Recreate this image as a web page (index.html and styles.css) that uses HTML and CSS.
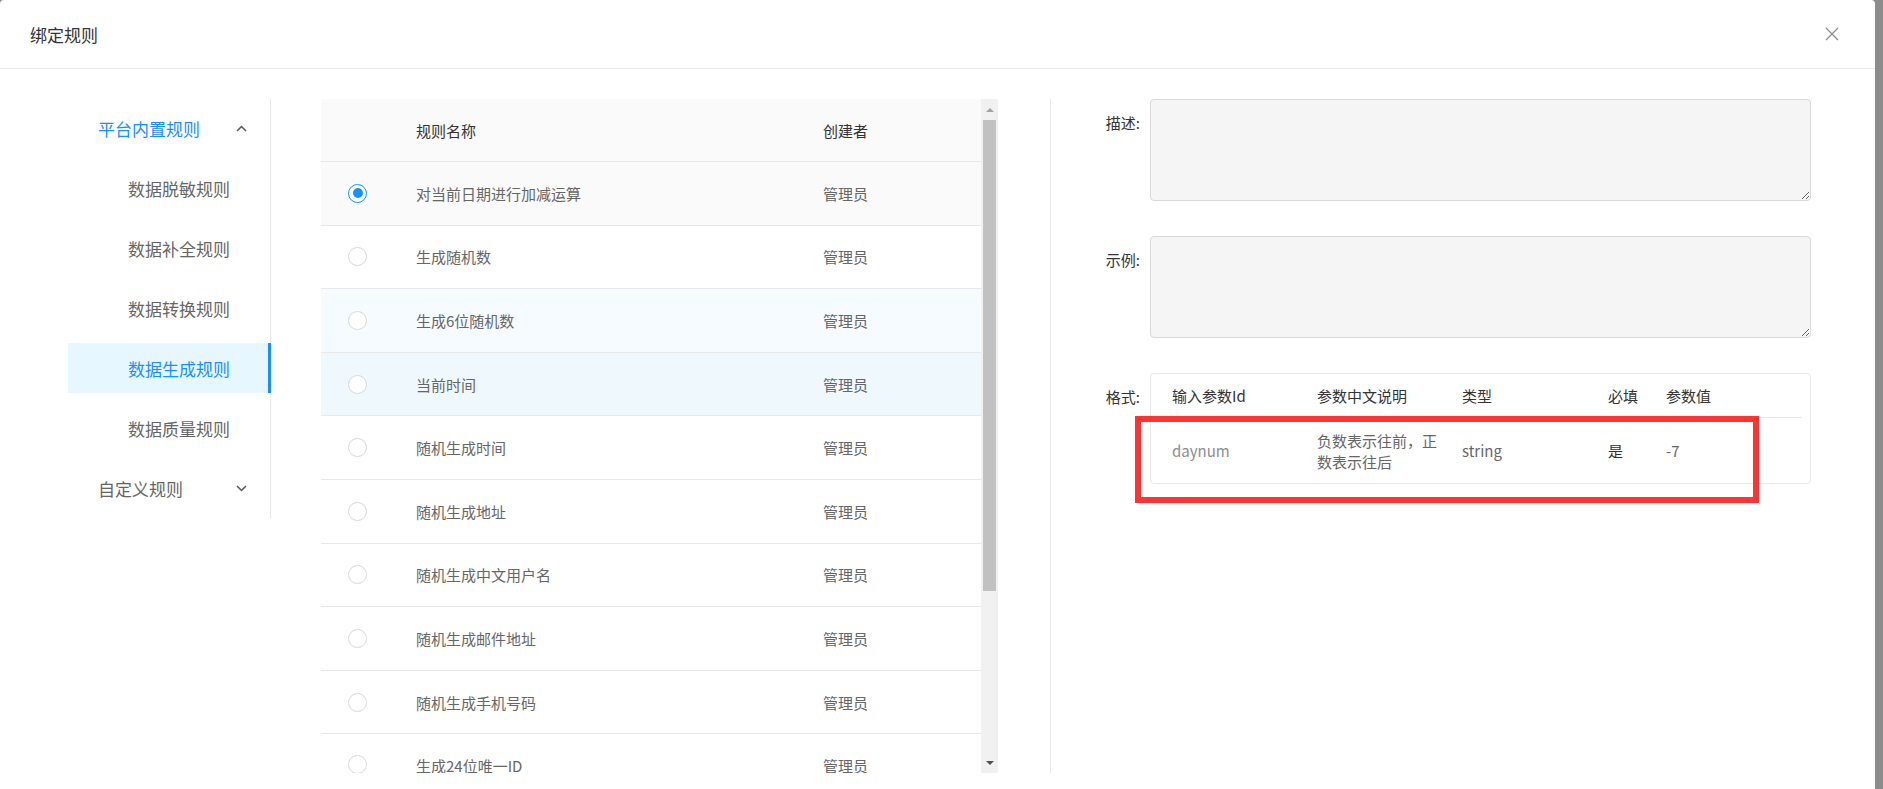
FILE: index.html
```html
<!DOCTYPE html>
<html lang="zh-CN">
<head>
  <meta charset="UTF-8" />
  <meta name="viewport" content="width=device-width, initial-scale=1" />
  <title>绑定规则</title>
  <link rel="stylesheet" href="styles.css">
</head>
<body>
  <div class="dialog">
    <div class="dialog-header">
      <span class="dialog-title">绑定规则</span>
      <svg class="close" width="14" height="14" viewBox="0 0 14 14">
        <path d="M1 1 L13 13 M13 1 L1 13" stroke="#8c8c8c" stroke-width="1.3" fill="none" />
      </svg>
    </div>

    <div class="dialog-body">
      <ul class="menu">
        <li class="submenu-title open">
          <span>平台内置规则</span>
          <svg width="11" height="7" viewBox="0 0 11 7"><path d="M1 6 L5.5 1.5 L10 6" stroke="#595959" stroke-width="1.5" fill="none" /></svg>
        </li>
        <li class="menu-item">数据脱敏规则</li>
        <li class="menu-item">数据补全规则</li>
        <li class="menu-item">数据转换规则</li>
        <li class="menu-item active">数据生成规则</li>
        <li class="menu-item">数据质量规则</li>
        <li class="submenu-title">
          <span>自定义规则</span>
          <svg width="11" height="7" viewBox="0 0 11 7"><path d="M1 1 L5.5 5.5 L10 1" stroke="#595959" stroke-width="1.5" fill="none" /></svg>
        </li>
      </ul>

      <div class="rule-panel">
        <div class="rule-table">
          <div class="row head">
            <div></div>
            <div>规则名称</div>
            <div>创建者</div>
          </div>
          <div class="row selected"><div><span class="radio checked"></span></div><div>对当前日期进行加减运算</div><div>管理员</div></div>
          <div class="row"><div><span class="radio"></span></div><div>生成随机数</div><div>管理员</div></div>
          <div class="row hover-light"><div><span class="radio"></span></div><div>生成6位随机数</div><div>管理员</div></div>
          <div class="row hover"><div><span class="radio"></span></div><div>当前时间</div><div>管理员</div></div>
          <div class="row"><div><span class="radio"></span></div><div>随机生成时间</div><div>管理员</div></div>
          <div class="row"><div><span class="radio"></span></div><div>随机生成地址</div><div>管理员</div></div>
          <div class="row"><div><span class="radio"></span></div><div>随机生成中文用户名</div><div>管理员</div></div>
          <div class="row"><div><span class="radio"></span></div><div>随机生成邮件地址</div><div>管理员</div></div>
          <div class="row"><div><span class="radio"></span></div><div>随机生成手机号码</div><div>管理员</div></div>
          <div class="row last"><div><span class="radio"></span></div><div>生成24位唯一ID</div><div>管理员</div></div>
        </div>
        <div class="scrollbar">
          <div class="scroll-btn"><span class="arrow-up"></span></div>
          <div class="scroll-track"><div class="scroll-thumb"></div></div>
          <div class="scroll-btn"><span class="arrow-down"></span></div>
        </div>
      </div>

      <div class="detail">
        <div class="form-item">
          <label>描述:</label>
          <textarea readonly></textarea>
        </div>
        <div class="form-item">
          <label>示例:</label>
          <textarea readonly></textarea>
        </div>
        <div class="form-item">
          <label>格式:</label>
          <div class="param-box">
            <div class="param-table">
              <div class="param-row param-head">
                <div>输入参数Id</div>
                <div>参数中文说明</div>
                <div>类型</div>
                <div>必填</div>
                <div>参数值</div>
              </div>
              <div class="param-row">
                <div class="muted">daynum</div>
                <div>负数表示往前，正数表示往后</div>
                <div>string</div>
                <div class="dark">是</div>
                <div>-7</div>
              </div>
            </div>
            <div class="highlight"></div>
          </div>
        </div>
      </div>
    </div>
  </div>
</body>
</html>
```

FILE: styles.css
```css
html, body {
  margin: 0;
  height: 100%;
  overflow: hidden;
}
body {
  background: #8c8c8c;
  font-family: "Noto Sans CJK SC", "Microsoft YaHei", sans-serif;
  color: #666;
}
ul {
  list-style: none;
  margin: 0;
  padding: 0;
}
.dialog {
  width: 1875px;
  height: 100%;
  background: #fff;
  border-radius: 4px 4px 0 0;
}
.dialog-header {
  height: 68px;
  border-bottom: 1px solid #e8e8e8;
  padding: 0 36px 0 30px;
  display: flex;
  align-items: center;
  justify-content: space-between;
}
.dialog-title {
  font-size: 17px;
  color: #333;
}
.dialog-body {
  display: flex;
  align-items: flex-start;
  padding: 30px 0 0 68px;
}

/* left menu */
.menu {
  width: 202px;
  height: 419px;
  border-right: 1px solid #e8e8e8;
  font-size: 17px;
  flex-shrink: 0;
}
.submenu-title, .menu-item {
  height: 50px;
  margin: 0 0 10px;
  display: flex;
  align-items: center;
  position: relative;
}
.submenu-title {
  padding: 0 23px 0 30px;
  justify-content: space-between;
}
.submenu-title.open {
  margin-top: 4px;
  color: #1890ff;
}
.menu-item {
  padding-left: 60px;
}
.menu-item.active {
  background: #e6f7ff;
  color: #1890ff;
}
.menu-item.active::after {
  content: "";
  position: absolute;
  right: -1px;
  top: 0;
  bottom: 0;
  border-right: 3px solid #1890ff;
}

/* rule list */
.rule-panel {
  margin-left: 50px;
  width: 677px;
  height: 674px;
  display: flex;
  flex-shrink: 0;
}
.rule-table {
  flex: 1;
  overflow: hidden;
  font-size: 15px;
}
.row {
  display: grid;
  grid-template-columns: 80px 407px 1fr;
  align-items: center;
  height: 63.6px;
  box-sizing: border-box;
  border-bottom: 1px solid #e8e8e8;
}
.row.last {
  align-items: start;
  padding-top: 21px;
}
.row > div:nth-child(2), .row > div:nth-child(3) {
  padding-left: 15px;
}
.row.head {
  height: 63px;
  background: #fafafa;
  color: #333;
}
.row.selected {
  background: #fafafa;
}
.row.hover-light {
  background: #f6fbff;
}
.row.hover {
  background: #eef8fd;
}
.radio {
  display: block;
  width: 19px;
  height: 19px;
  margin-left: 27px;
  box-sizing: border-box;
  border: 1px solid #d9d9d9;
  border-radius: 50%;
  background: #fff;
  position: relative;
}
.radio.checked {
  border-color: #1890ff;
}
.radio.checked::after {
  content: "";
  position: absolute;
  left: 3.5px;
  top: 3.5px;
  width: 10px;
  height: 10px;
  border-radius: 50%;
  background: #1890ff;
}
.scrollbar {
  width: 17px;
  background: #f1f1f1;
  display: flex;
  flex-direction: column;
  flex-shrink: 0;
}
.scroll-btn {
  height: 21px;
  display: flex;
  align-items: center;
  justify-content: center;
}
.scroll-track {
  flex: 1;
  padding: 0 2px;
}
.scroll-thumb {
  height: 471px;
  background: #c1c1c1;
}
.arrow-up {
  border-left: 4px solid transparent;
  border-right: 4px solid transparent;
  border-bottom: 4px solid #a3a3a3;
}
.arrow-down {
  border-left: 4px solid transparent;
  border-right: 4px solid transparent;
  border-top: 4px solid #505050;
}

/* right detail */
.detail {
  margin-left: 52px;
  height: 674px;
  border-left: 1px solid #e8e8e8;
  font-size: 15px;
}
.form-item {
  display: flex;
  align-items: flex-start;
  margin-bottom: 35px;
}
.form-item label {
  width: 89px;
  padding-right: 10px;
  text-align: right;
  line-height: 48px;
  color: #333;
}
textarea {
  width: 661px;
  height: 102px;
  box-sizing: border-box;
  margin: 0;
  background: #f5f5f5;
  border: 1px solid #d9d9d9;
  border-radius: 4px;
  outline: none;
  font: inherit;
}
.param-box {
  width: 661px;
  box-sizing: border-box;
  border: 1px solid #e8e8e8;
  border-radius: 4px;
  position: relative;
}
.param-table {
  width: 651px;
}
.param-row {
  display: grid;
  grid-template-columns: 166px 145px 146px 58px 1fr;
  align-items: center;
}
.param-row > div {
  padding-right: 16px;
  line-height: 21px;
}
.param-row > div:first-child {
  padding-left: 21px;
}
.param-head {
  height: 43px;
  border-bottom: 1px solid #e8e8e8;
  color: #333;
}
.param-row:not(.param-head) {
  height: 65px;
}
.muted {
  color: #8c8c8c;
}
.dark {
  color: #333;
}
.highlight {
  position: absolute;
  left: -16px;
  top: 42px;
  width: 624px;
  height: 87px;
  box-sizing: border-box;
  border: 6px solid #ff3333;
}
```
